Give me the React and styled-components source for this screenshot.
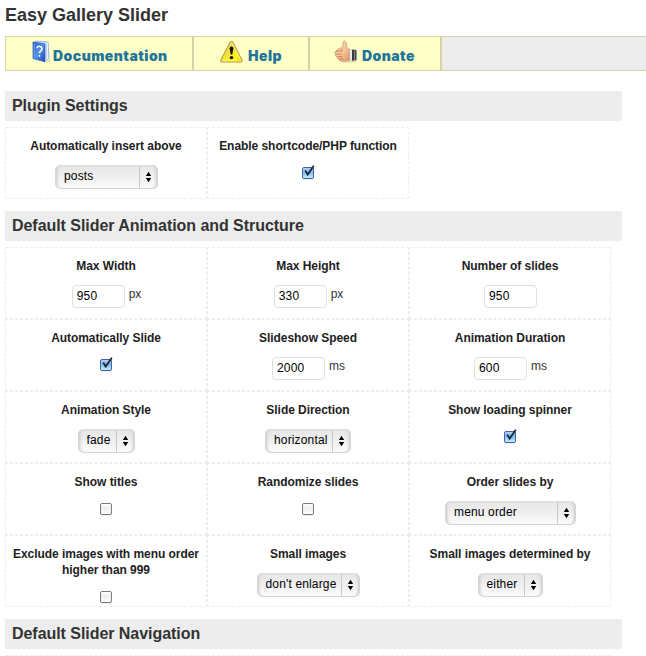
import React from "react";
import styled, { createGlobalStyle } from "styled-components";

const GlobalStyle = createGlobalStyle`
  * { box-sizing: border-box; }
  html, body { margin: 0; padding: 0; background: #fff; overflow: hidden; }
  body { font: 12px/16px "Liberation Sans", Arial, sans-serif; color: #333; }
`;

const Page = styled.main`
  width: 646px;
  height: 656px;
  overflow: hidden;
  padding-left: 5px;
`;

const Title = styled.h1`
  margin: 0;
  height: 36px;
  padding-top: 4px;
  font-size: 18px;
  line-height: 22px;
  font-weight: bold;
`;

const Nav = styled.nav`
  display: flex;
  height: 35px;
  background: #ededed;
  border-top: 1px solid #d7d3a6;
  border-bottom: 1px solid #d7d3a6;
`;

const NavItem = styled.a`
  display: flex;
  width: ${(p) => p.$width}px;
  padding-left: ${(p) => p.$pad}px;
  background: #ffffc8;
  border: solid #d7d3a6;
  border-width: 0 1px;
  color: #21759b;
  text-decoration: none;

  svg {
    flex: none;
    margin-top: 3px;
  }
`;

const NavText = styled.span`
  margin-left: ${(p) => p.$gap}px;
  padding-top: 9px;
  font: 900 14px/20px Inter, "Liberation Sans", sans-serif;
  letter-spacing: 0.45px;
`;

const NavEnd = styled.span`
  border-left: 1px solid #d7d3a6;
`;

const Heading = styled.h2`
  width: 617px;
  height: 30px;
  margin: ${(p) => p.$top}px 0 6px;
  padding: 0 7px;
  background: #ededed;
  font-size: 16px;
  line-height: 29px;
  font-weight: bold;
  letter-spacing: -0.05px;
`;

const Grid = styled.div`
  display: grid;
  grid-template-columns: repeat(${(p) => p.$columns}, 202px);
  grid-auto-rows: 72px;
  width: max-content;
`;

const Cell = styled.div`
  display: flex;
  flex-direction: column;
  align-items: center;
  border: 1px dashed #ededed;
  padding-top: 10px;
`;

const Label = styled.label`
  color: #222;
  font-weight: bold;
  text-align: center;
  letter-spacing: -0.05px;
`;

const Field = styled.div`
  display: flex;
  margin-top: 11px;
  padding-left: ${(p) => p.$shift || 0}px;
`;

const Input = styled.input`
  width: 53px;
  height: 23px;
  padding: 0 4px 2px;
  background: #fff;
  border: 1px solid #dfdfdf;
  border-radius: 4px;
  color: #000;
  font: 12px "Liberation Sans", Arial, sans-serif;
  letter-spacing: 0.2px;
  outline: none;
`;

const Unit = styled.span`
  margin: 1px 0 0 4px;
`;

const SelectBox = styled.div`
  position: relative;
  width: ${(p) => p.$width}px;
  height: 24px;

  svg {
    position: absolute;
    top: 0;
    right: 0;
    pointer-events: none;
  }
`;

const NativeSelect = styled.select`
  appearance: none;
  display: block;
  width: 100%;
  height: 24px;
  padding: 0 18px 2px 8px;
  border: 1px solid #dcdcdc;
  border-color: #dedede #d6d6d6 #d6d6d6;
  border-radius: 5px;
  background: linear-gradient(#e6e6e6, #f0f0f0 50%, #fbfbfb);
  box-shadow: inset 3px 0 3px -2px #c8c8c8, inset -3px 0 3px -2px #c8c8c8;
  color: #000;
  font: 12px "Liberation Sans", Arial, sans-serif;
  letter-spacing: 0.15px;
`;

const CheckMark = styled.span`
  display: flex;
  margin-top: -2px;
`;

function Select({ value, width }) {
  return (
    <SelectBox $width={width}>
      <NativeSelect defaultValue={value}>
        <option>{value}</option>
      </NativeSelect>
      <svg width="19" height="24" viewBox="0 0 19 24">
        <path d="M.5 1v22" stroke="#c8c8c8" />
        <path d="M6.8 11 9.5 6.7 12.2 11zM6.8 13h5.4l-2.7 4.3z" fill="#000" />
      </svg>
    </SelectBox>
  );
}

function Checkbox({ checked }) {
  const id = checked ? "check-on" : "check-off";
  return (
    <CheckMark role="checkbox" aria-checked={!!checked}>
      <svg width="14" height="18" viewBox="0 0 14 18">
        <defs>
          <linearGradient id={id} x1="0" y1="0" x2="0" y2="1">
            <stop offset="0" stopColor={checked ? "#b4d2f5" : "#fff"} />
            <stop offset=".45" stopColor={checked ? "#7dbaf2" : "#ededed"} />
            <stop offset="1" stopColor={checked ? "#c4f6ff" : "#fff"} />
          </linearGradient>
        </defs>
        <rect x="1.5" y="5" width="11" height="11" rx="2" fill="none" stroke="#000" strokeOpacity=".15" />
        <rect
          x="1.5"
          y="4.5"
          width="11"
          height="11"
          rx="1.5"
          fill={`url(#${id})`}
          stroke={checked ? "#4a62a4" : "#7b7b7b"}
        />
        {checked && (
          <path d="M4.2 7.6 6.7 11.6 12.8 2.8" fill="none" stroke="#1b2632" strokeWidth="1.8" />
        )}
      </svg>
    </CheckMark>
  );
}

function BookIcon() {
  return (
    <svg width="20" height="24" viewBox="0 0 20 24">
      <defs>
        <linearGradient id="book" x1="0" y1="0" x2="1" y2="1">
          <stop offset="0" stopColor="#2d62c2" />
          <stop offset=".5" stopColor="#5590ed" />
          <stop offset="1" stopColor="#1747b4" />
        </linearGradient>
      </defs>
      <path d="m15 20 4-1v2l-5 2z" fill="#000" opacity=".13" />
      <path d="m1 3 3-2 12 1 1 16-5 4z" fill="#dae9fc" stroke="#719adb" strokeWidth=".7" />
      <path d="m13 4 2.8-1.3v16L13 21z" fill="#eef6ff" />
      <path d="M14.3 4v15" stroke="#9bb8e5" strokeWidth=".7" />
      <path d="m1 2 12 1.8v18L1 18.5z" fill="url(#book)" stroke="#2859b5" strokeWidth=".7" />
      <path d="M2.3 3.5v14" stroke="#83b2f4" strokeWidth=".7" />
      <path d="M5 8.2C5 5.5 10 5.8 10 9c0 2-2.6 2.2-2.6 4.2M7.4 15v1.8" fill="none" stroke="#fff" strokeWidth="1.5" />
    </svg>
  );
}

function WarningIcon() {
  return (
    <svg width="25" height="24" viewBox="0 0 25 24">
      <defs>
        <linearGradient id="warning" x1="0" y1="0" x2="1" y2="1">
          <stop offset="0" stopColor="#e5ce68" />
          <stop offset=".45" stopColor="#efdf45" />
          <stop offset=".75" stopColor="#fff719" />
          <stop offset="1" stopColor="#e8c900" />
        </linearGradient>
      </defs>
      <path d="M11.2 2Q12.5.5 13.8 2L23 20q.6 2-1 2H3q-2 0-1.2-2z" fill="url(#warning)" stroke="#b89538" />
      <path d="M12.5 2.2 21.8 20.8H3" fill="none" stroke="#fff8a0" strokeWidth=".7" />
      <path d="M10.6 8.3q0-1.7 1.9-1.7t1.9 1.7l-1.1 6.2h-1.6z" fill="#171700" />
      <ellipse cx="12.5" cy="17.6" rx="1.8" ry="1.6" fill="#171700" />
    </svg>
  );
}

function ThumbIcon() {
  return (
    <svg width="24" height="24" viewBox="0 0 24 24">
      <defs>
        <linearGradient id="hand" x1="0" y1="0" x2="1" y2="1">
          <stop offset="0" stopColor="#fce0bd" />
          <stop offset=".5" stopColor="#f8c99b" />
          <stop offset="1" stopColor="#d98c60" />
        </linearGradient>
      </defs>
      <ellipse cx="15" cy="21.8" rx="8" ry="1" fill="#000" opacity=".12" />
      <path
        d="M7 8c2-.3 2-2.5 2.2-5.6.1-2 2.3-1.8 2.8-.1.6 2 .3 5 1.8 6.2 1 .9 2.3 1 3.2 1.2v10c-2.5.9-6 1.6-9 1.4-1.8-.1-3-.5-2.8-1.7-1.5-.2-2.4-1-1.9-2.3C1.9 16.8 1.2 15.6 1.8 14 .3 13 .7 11.3 2 11.2 3.2 9.6 5.2 8.7 7 8z"
        fill="url(#hand)"
        stroke="#c98658"
        strokeWidth=".7"
      />
      <path d="M2 11.4c2-.2 3.5-.5 5.8-.2M2.2 14.2l5.3-.3M3.3 17l4.8-.6M5.2 19.3l3.8-.8M8 8.8l-.5 2.4" fill="none" stroke="#b96e47" strokeWidth=".8" />
      <path d="m16 9.5 2 .2v10.5l-2-.3z" fill="#fff" stroke="#a5aebb" strokeWidth=".5" />
      <path d="m18 9.5 4.5.5v10.2L18 20.7z" fill="#353b43" />
      <path d="M20.7 10.5v9.5" stroke="#8c949d" />
    </svg>
  );
}

const sliderSettings = [
  { label: "Max Width", input: "950", unit: "px", shift: 1 },
  { label: "Max Height", input: "330", unit: "px", shift: 1 },
  { label: "Number of slides", input: "950", shift: 1 },
  { label: "Automatically Slide", checkbox: true, checked: true },
  { label: "Slideshow Speed", input: "2000", unit: "ms", shift: 1 },
  { label: "Animation Duration", input: "600", unit: "ms", shift: 1 },
  { label: "Animation Style", select: "fade", width: 57 },
  { label: "Slide Direction", select: "horizontal", width: 86 },
  { label: "Show loading spinner", checkbox: true, checked: true },
  { label: "Show titles", checkbox: true },
  { label: "Randomize slides", checkbox: true },
  { label: "Order slides by", select: "menu order", width: 131, shift: 1 },
  { label: "Exclude images with menu order higher than 999", checkbox: true },
  { label: "Small images", select: "don't enlarge", width: 103 },
  { label: "Small images determined by", select: "either", width: 65 },
];

const pluginSettings = [
  { label: "Automatically insert above", select: "posts", width: 103, shift: 1 },
  { label: "Enable shortcode/PHP function", checkbox: true, checked: true },
];

function Setting({ item }) {
  return (
    <Cell>
      <Label>{item.label}</Label>
      <Field $shift={item.shift}>
        {item.select && <Select value={item.select} width={item.width} />}
        {item.input && <Input defaultValue={item.input} />}
        {item.unit && <Unit>{item.unit}</Unit>}
        {item.checkbox && <Checkbox checked={item.checked} />}
      </Field>
    </Cell>
  );
}

export default function App() {
  return (
    <>
      <GlobalStyle />
      <Page>
        <Title>Easy Gallery Slider</Title>
        <Nav>
          <NavItem $width={188} $pad={26}>
            <BookIcon />
            <NavText $gap={1}>Documentation</NavText>
          </NavItem>
          <NavItem $width={116} $pad={25}>
            <WarningIcon />
            <NavText $gap={4}>Help</NavText>
          </NavItem>
          <NavItem $width={132} $pad={24}>
            <ThumbIcon />
            <NavText $gap={4}>Donate</NavText>
          </NavItem>
          <NavEnd />
        </Nav>
        <Heading $top={20}>Plugin Settings</Heading>
        <Grid $columns={2}>
          {pluginSettings.map((s) => <Setting key={s.label} item={s} />)}
        </Grid>
        <Heading $top={12}>Default Slider Animation and Structure</Heading>
        <Grid $columns={3}>
          {sliderSettings.map((s) => <Setting key={s.label} item={s} />)}
        </Grid>
        <Heading $top={12}>Default Slider Navigation</Heading>
        <Grid $columns={3}>
          <Cell />
          <Cell />
          <Cell />
        </Grid>
      </Page>
    </>
  );
}
